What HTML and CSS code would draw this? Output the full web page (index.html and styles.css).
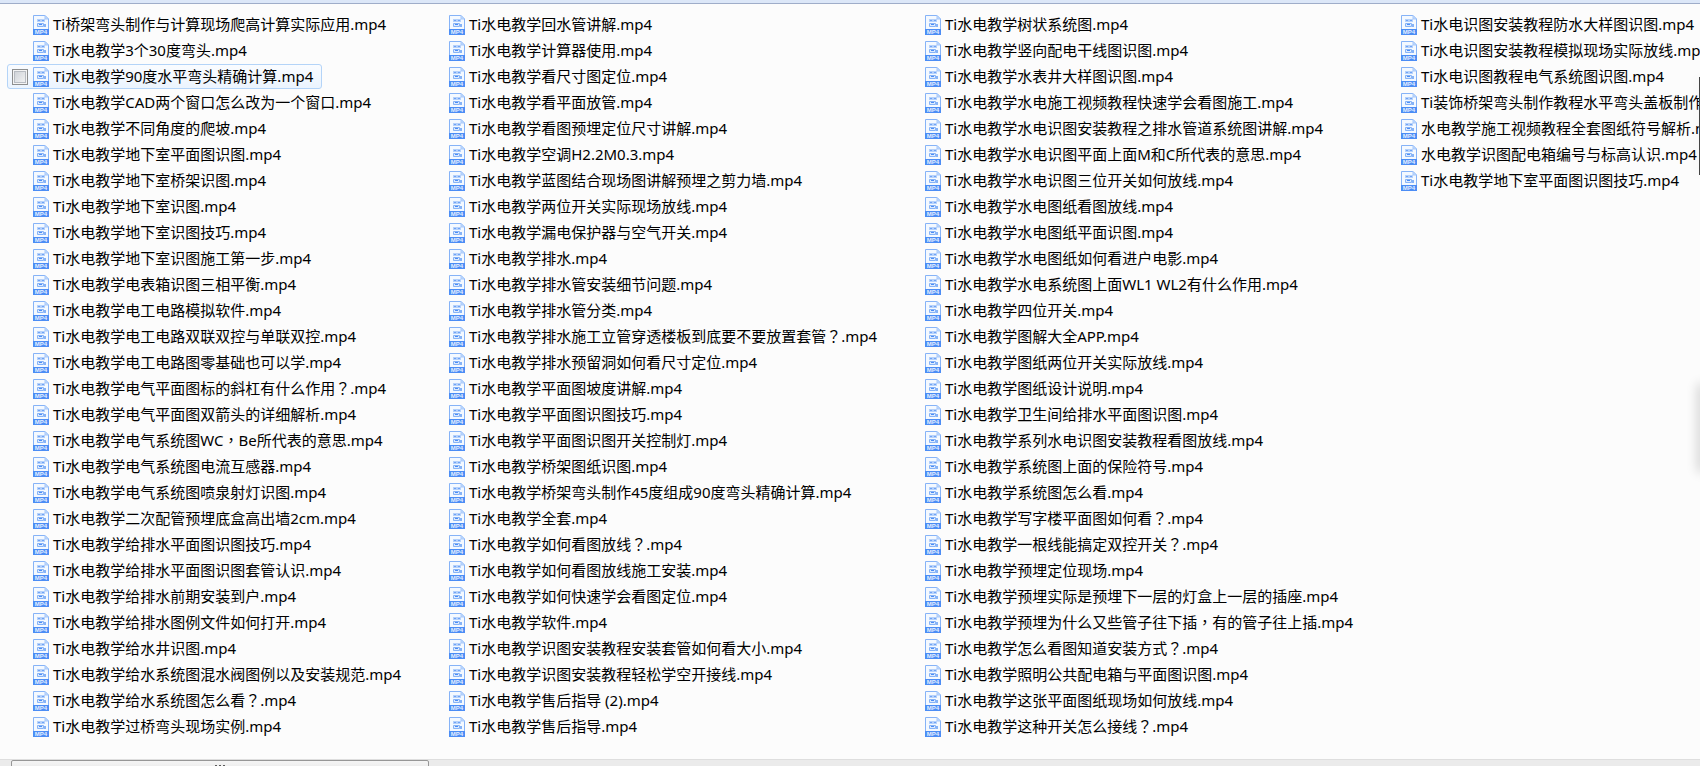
FILE: index.html
```html
<!DOCTYPE html>
<html lang="zh-CN">
<head>
    <meta charset="UTF-8">
    <meta name="viewport" content="width=device-width, initial-scale=1.0">
    <title>水电教学</title>
    <link rel="stylesheet" href="styles.css">
</head>
<body>
    <!-- Shared file icon -->
    <svg class="icon-defs" aria-hidden="true">
        <symbol id="icon-mp4" viewBox="0 0 16 20">
            <path d="M.5 .5H12L15.5 4V19.5H.5Z" fill="#f4f9ff" stroke="#86b3f7"/>
            <path d="M12 .5V4H15.5Z" fill="#c5dcfc" stroke="#a5c7fa"/>
            <path d="M4 4h8v3H4z" fill="#b5d1fb"/>
            <path d="M5 5h2v1H5zM9 5h2v1H9z" fill="#6fa3f5"/>
            <path d="M4.500 8.500h6v3h-6z" fill="#dceafe" stroke="#86b3f7"/>
            <path d="M6 9h3v1H6z" fill="#4c8df5"/>
            <path d="M11 9h2v3h-2z" fill="#86b3f7"/>
            <path d="M0 14h16v6H0z" fill="#4c8df5"/>
            <text x="8" y="19" class="icon-text">MP4</text>
        </symbol>
    </svg>

    <div class="top-bar"></div>

    <main class="file-view" id="file-view"></main>

    <div class="scrollbar">
        <div class="scroll-thumb">
            <span class="grip"></span>
            <span class="grip"></span>
            <span class="grip"></span>
        </div>
    </div>

    <div class="edge-panel"></div>
    <div class="edge-shadow"></div>

    <script src="script.js"></script>
</body>
</html>
```
FILE: styles.css
```css
* {
    margin: 0;
    padding: 0;
    box-sizing: border-box;
}

body {
    position: relative;
    display: flex;
    flex-direction: column;
    height: 100vh;
    overflow: hidden;
    background: #fcfcfc;
    color: #000;
    font-family: "Noto Sans", "Noto Sans CJK SC", sans-serif;
    font-size: 15px;
    line-height: 23px;
}

.icon-defs {
    display: none;
}

.icon-text {
    fill: #e4efff;
    font-family: "Liberation Sans", sans-serif;
    font-size: 6px;
    font-weight: bold;
    text-anchor: middle;
}

.top-bar {
    flex: none;
    height: 4px;
    background: #dce7f8;
    border-bottom: 1px solid #9fadc9;
}

/* File columns */
.file-view {
    flex: 1;
    display: grid;
    grid-template-columns: 416px 476px 476px max-content;
    min-height: 0;
    padding: 8px 0 0 7px;
    overflow: hidden;
}

.file-column {
    display: flex;
    flex-direction: column;
    align-items: flex-start;
    gap: 1px;
    list-style: none;
}

.file-item {
    display: flex;
    align-items: center;
    height: 25px;
    padding: 0 8px 0 4px;
    border: 1px solid transparent;
    border-radius: 3px;
    white-space: nowrap;
}

.file-item.hovered {
    background: linear-gradient(#fafcff, #ebf4fe);
    border-color: #b4d4f8;
}

.file-check {
    appearance: none;
    flex: none;
    width: 16px;
    height: 16px;
    margin-right: 5px;
    border: 1px solid #8e8f8f;
    background: linear-gradient(135deg, #cbcfd5, #f6f6f6);
    box-shadow: inset 0 0 0 1px #f4f4f4, inset 0 0 0 2px #b8bcc2;
    opacity: 0;
}

.file-item.hovered .file-check {
    opacity: 1;
}

.file-icon {
    flex: none;
    width: 16px;
    height: 20px;
    margin-right: 4px;
}

/* Full-width punctuation centred in its cell */
.punct {
    font-family: "Noto Sans CJK TC", sans-serif;
    line-height: 1;
}

/* Horizontal scrollbar */
.scrollbar {
    flex: none;
    height: 7px;
    padding-left: 11px;
    background: #ebebeb;
    border-top: 1px solid #dedede;
    overflow: hidden;
}

.scroll-thumb {
    display: flex;
    justify-content: center;
    gap: 2px;
    width: 418px;
    height: 16px;
    padding-top: 4px;
    background: linear-gradient(#f5f5f5, #e3e3e3);
    border: 1px solid #979797;
    border-radius: 2px;
}

.grip {
    width: 2px;
    height: 8px;
    background: #5a5a5a;
}

/* Sliver of the floating side panel */
.edge-panel {
    position: absolute;
    top: 77px;
    right: 0;
    width: 1px;
    height: 98px;
    background: #444;
    box-shadow: 0 0 12px rgba(0, 0, 0, 0.2);
}

.edge-shadow {
    position: absolute;
    top: 386px;
    right: -4px;
    width: 4px;
    height: 84px;
    box-shadow: 0 0 12px 2px rgba(0, 0, 0, 0.2);
}
```
FILE: script.js
```js
const columns = [
    [
        'Ti桥架弯头制作与计算现场爬高计算实际应用',
        'Ti水电教学3个30度弯头',
        'Ti水电教学90度水平弯头精确计算',
        'Ti水电教学CAD两个窗口怎么改为一个窗口',
        'Ti水电教学不同角度的爬坡',
        'Ti水电教学地下室平面图识图',
        'Ti水电教学地下室桥架识图',
        'Ti水电教学地下室识图',
        'Ti水电教学地下室识图技巧',
        'Ti水电教学地下室识图施工第一步',
        'Ti水电教学电表箱识图三相平衡',
        'Ti水电教学电工电路模拟软件',
        'Ti水电教学电工电路双联双控与单联双控',
        'Ti水电教学电工电路图零基础也可以学',
        'Ti水电教学电气平面图标的斜杠有什么作用？',
        'Ti水电教学电气平面图双箭头的详细解析',
        'Ti水电教学电气系统图WC，Be所代表的意思',
        'Ti水电教学电气系统图电流互感器',
        'Ti水电教学电气系统图喷泉射灯识图',
        'Ti水电教学二次配管预埋底盒高出墙2cm',
        'Ti水电教学给排水平面图识图技巧',
        'Ti水电教学给排水平面图识图套管认识',
        'Ti水电教学给排水前期安装到户',
        'Ti水电教学给排水图例文件如何打开',
        'Ti水电教学给水井识图',
        'Ti水电教学给水系统图混水阀图例以及安装规范',
        'Ti水电教学给水系统图怎么看？',
        'Ti水电教学过桥弯头现场实例'
    ],
    [
        'Ti水电教学回水管讲解',
        'Ti水电教学计算器使用',
        'Ti水电教学看尺寸图定位',
        'Ti水电教学看平面放管',
        'Ti水电教学看图预埋定位尺寸讲解',
        'Ti水电教学空调H2.2M0.3',
        'Ti水电教学蓝图结合现场图讲解预埋之剪力墙',
        'Ti水电教学两位开关实际现场放线',
        'Ti水电教学漏电保护器与空气开关',
        'Ti水电教学排水',
        'Ti水电教学排水管安装细节问题',
        'Ti水电教学排水管分类',
        'Ti水电教学排水施工立管穿透楼板到底要不要放置套管？',
        'Ti水电教学排水预留洞如何看尺寸定位',
        'Ti水电教学平面图坡度讲解',
        'Ti水电教学平面图识图技巧',
        'Ti水电教学平面图识图开关控制灯',
        'Ti水电教学桥架图纸识图',
        'Ti水电教学桥架弯头制作45度组成90度弯头精确计算',
        'Ti水电教学全套',
        'Ti水电教学如何看图放线？',
        'Ti水电教学如何看图放线施工安装',
        'Ti水电教学如何快速学会看图定位',
        'Ti水电教学软件',
        'Ti水电教学识图安装教程安装套管如何看大小',
        'Ti水电教学识图安装教程轻松学空开接线',
        'Ti水电教学售后指导 (2)',
        'Ti水电教学售后指导'
    ],
    [
        'Ti水电教学树状系统图',
        'Ti水电教学竖向配电干线图识图',
        'Ti水电教学水表井大样图识图',
        'Ti水电教学水电施工视频教程快速学会看图施工',
        'Ti水电教学水电识图安装教程之排水管道系统图讲解',
        'Ti水电教学水电识图平面上面M和C所代表的意思',
        'Ti水电教学水电识图三位开关如何放线',
        'Ti水电教学水电图纸看图放线',
        'Ti水电教学水电图纸平面识图',
        'Ti水电教学水电图纸如何看进户电影',
        'Ti水电教学水电系统图上面WL1 WL2有什么作用',
        'Ti水电教学四位开关',
        'Ti水电教学图解大全APP',
        'Ti水电教学图纸两位开关实际放线',
        'Ti水电教学图纸设计说明',
        'Ti水电教学卫生间给排水平面图识图',
        'Ti水电教学系列水电识图安装教程看图放线',
        'Ti水电教学系统图上面的保险符号',
        'Ti水电教学系统图怎么看',
        'Ti水电教学写字楼平面图如何看？',
        'Ti水电教学一根线能搞定双控开关？',
        'Ti水电教学预埋定位现场',
        'Ti水电教学预埋实际是预埋下一层的灯盒上一层的插座',
        'Ti水电教学预埋为什么又些管子往下插，有的管子往上插',
        'Ti水电教学怎么看图知道安装方式？',
        'Ti水电教学照明公共配电箱与平面图识图',
        'Ti水电教学这张平面图纸现场如何放线',
        'Ti水电教学这种开关怎么接线？'
    ],
    [
        'Ti水电识图安装教程防水大样图识图',
        'Ti水电识图安装教程模拟现场实际放线',
        'Ti水电识图教程电气系统图识图',
        'Ti装饰桥架弯头制作教程水平弯头盖板制作',
        '水电教学施工视频教程全套图纸符号解析',
        '水电教学识图配电箱编号与标高认识',
        'Ti水电教学地下室平面图识图技巧'
    ]
];

const hoveredFile = 'Ti水电教学90度水平弯头精确计算';
const fileView = document.getElementById('file-view');

columns.forEach(function(files, col) {
    const list = document.createElement('ul');
    list.className = 'file-column';

    files.forEach(function(name, row) {
        const id = 'file-' + col + '-' + row;
        const label = name.replace(/[？，]/g, '<span class="punct" lang="zh-TW">$&</span>');
        const item = document.createElement('li');
        item.className = name === hoveredFile ? 'file-item hovered' : 'file-item';
        item.innerHTML =
            '<input type="checkbox" class="file-check" id="' + id + '">' +
            '<svg class="file-icon" aria-hidden="true"><use href="#icon-mp4"/></svg>' +
            '<label class="file-name" for="' + id + '">' + label + '.mp4</label>';
        list.appendChild(item);
    });

    fileView.appendChild(list);
});
```
